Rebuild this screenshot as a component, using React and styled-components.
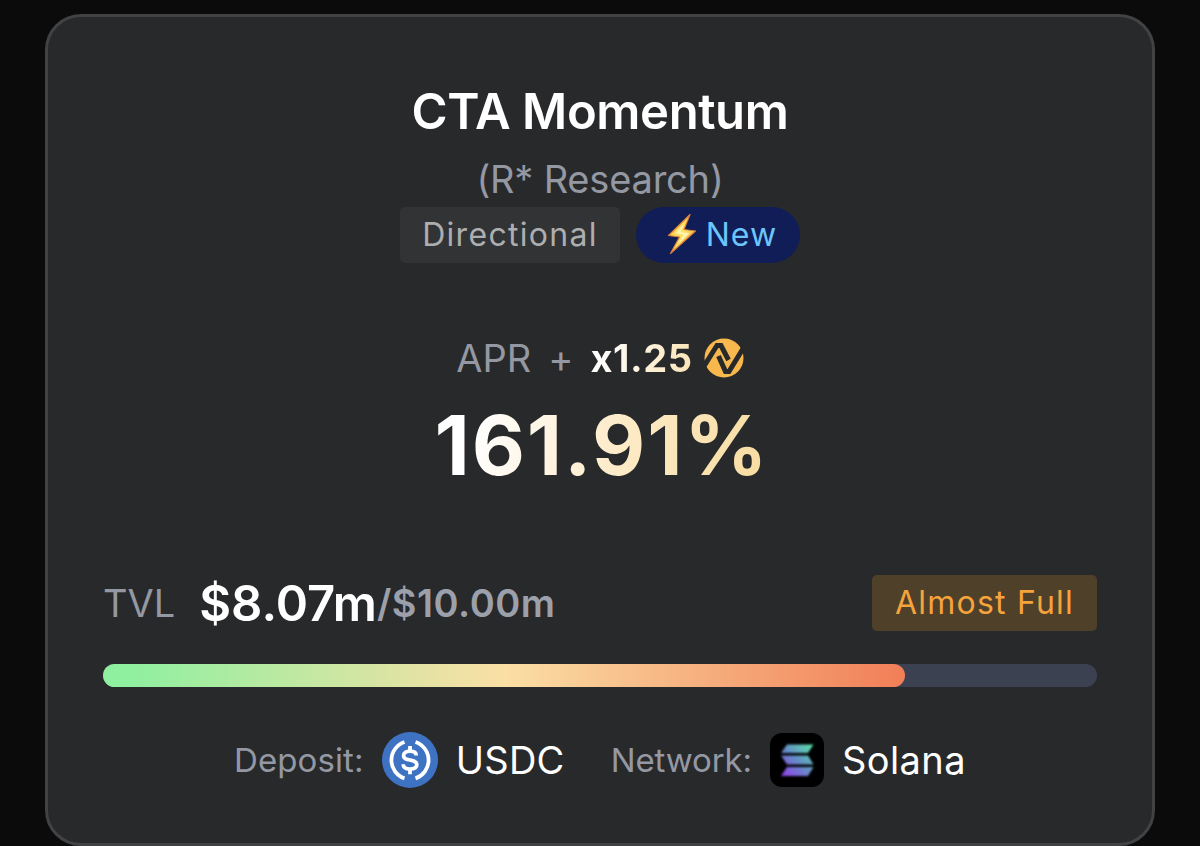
import styled, { createGlobalStyle } from "styled-components";

const vault = {
  name: "CTA Momentum",
  manager: "(R* Research)",
  strategy: "Directional",
  multiplier: "x1.25",
  apr: "161.91%",
  tvl: "$8.07m",
  capacity: "$10.00m",
  filled: 80.7,
};

export default function App() {
  return (
    <>
      <GlobalStyle />
      <Page>
        <Card>
          <Title>{vault.name}</Title>
          <Manager>{vault.manager}</Manager>
          <Badges>
            <Tag>
              <Text $size={32} $spacing={1.3}>{vault.strategy}</Text>
            </Tag>
            <NewPill>
              <BoltIcon />
              <Text $size={32} $spacing={1.1}>New</Text>
            </NewPill>
          </Badges>

          <AprRow>
            <Text $size={38} $color="#9498a3">APR</Text>
            <Text $size={38} $color="#9498a3">+</Text>
            <Multiplier>{vault.multiplier}</Multiplier>
            <NeutralIcon />
          </AprRow>
          <Apr>{vault.apr}</Apr>

          <TvlRow>
            <Text $size={38} $color="#9498a3">TVL</Text>
            <Amounts>
              <Text $size={49} $weight={600} $color="#ffffff">{vault.tvl}</Text>
              <Text $size={38} $weight={600} $spacing={0.5} $color="#9ca0ab">
                /{vault.capacity}
              </Text>
            </Amounts>
            <Status>
              <Text $size={32} $spacing={1.2}>Almost Full</Text>
            </Status>
          </TvlRow>
          <Track>
            <Fill style={{ width: `${vault.filled}%` }} />
          </Track>

          <Footer>
            <Asset>
              <Text $size={33} $spacing={0.1} $color="#9498a3">Deposit:</Text>
              <UsdcIcon />
              <Text $size={38} $spacing={0.3} $color="#ffffff">USDC</Text>
            </Asset>
            <Asset>
              <Text $size={33} $spacing={-0.1} $color="#9498a3">Network:</Text>
              <SolanaIcon />
              <Text $size={38} $spacing={0.4} $color="#ffffff">Solana</Text>
            </Asset>
          </Footer>
        </Card>
      </Page>
    </>
  );
}

function BoltIcon() {
  return (
    <svg width="30" height="42" viewBox="0 0 30 42">
      <defs>
        <linearGradient id="bolt" x1="0" y1="0" x2="1" y2="1">
          <stop offset="0" stopColor="#ffb52e" />
          <stop offset="0.5" stopColor="#ffe467" />
          <stop offset="1" stopColor="#f58a2c" />
        </linearGradient>
      </defs>
      <path
        d="M23 1.5 1.5 22.5 12.5 24 3.5 40.5 28.5 18 17 16.5Z"
        fill="url(#bolt)"
        stroke="#d9803a"
        strokeWidth="1.2"
        strokeLinejoin="round"
      />
      <path d="M17.5 10.5 8 20.3 16.5 21.5 11 31 22.5 20.3 13.5 19Z" fill="#fff3b0" />
    </svg>
  );
}

function NeutralIcon() {
  return (
    <svg width="40" height="40" viewBox="0 0 40 40">
      <circle cx="20" cy="20" r="19.5" fill="#f8b84e" />
      <g fill="none" stroke="#28292b" strokeWidth="5">
        <path d="M0.5 27.5 13 7.5H17L24.5 22" />
        <path d="M14.5 18 21.5 33.5H25L40 9" />
      </g>
    </svg>
  );
}

function UsdcIcon() {
  return (
    <svg width="56" height="56" viewBox="0 0 56 56">
      <circle cx="28" cy="28" r="28" fill="#3e73c4" />
      <g fill="none" stroke="#fff" strokeWidth="3.8">
        <path d="M22.5 10A19.2 19.2 0 0 0 22.5 46.4" />
        <path d="M33.5 10A19.2 19.2 0 0 1 33.5 46.4" />
        <path
          d="M34.2 23.5C34.2 20.6 31.7 19.2 28 19.2S21.6 20.9 21.6 23.7C21.6 30 34.8 26 34.8 32.7C34.8 35.6 32 37 28 37S21.2 35.4 21.2 32.2"
          strokeWidth="3.7"
        />
        <path d="M28 14V19.2M28 37V42.2" />
      </g>
    </svg>
  );
}

function SolanaIcon() {
  return (
    <svg width="54" height="54" viewBox="0 0 54 54">
      <defs>
        <linearGradient id="sol" gradientUnits="userSpaceOnUse" x1="42" y1="12" x2="14" y2="42">
          <stop offset="0" stopColor="#5ce0a8" />
          <stop offset="0.5" stopColor="#6390c6" />
          <stop offset="1" stopColor="#8d45e8" />
        </linearGradient>
        <filter id="soft">
          <feGaussianBlur stdDeviation="0.8" />
        </filter>
      </defs>
      <rect width="54" height="54" rx="12" fill="#000" />
      <path
        fill="url(#sol)"
        filter="url(#soft)"
        d="M17 11.5H43.5L38 20H11ZM11 22.5H38L43.5 31.5H17ZM17 34H43.5L38 43H11Z"
      />
    </svg>
  );
}

const GlobalStyle = createGlobalStyle`
  * {
    box-sizing: border-box;
  }

  body {
    margin: 0;
    background: #0b0b0b;
    font-family: Inter, "Liberation Sans", sans-serif;
  }

  svg {
    display: block;
    flex-shrink: 0;
  }
`;

const Page = styled.main`
  height: 846px;
  padding: 14px 45px 0;
  overflow: hidden;
`;

const Card = styled.section`
  height: 832px;
  padding: 65px 55px 0;
  display: flex;
  flex-direction: column;
  align-items: center;
  background: #28292b;
  border: 3px solid #414244;
  border-radius: 36px;
  white-space: nowrap;
`;

const Text = styled.span`
  font-size: ${({ $size }) => $size}px;
  font-weight: ${({ $weight }) => $weight || 400};
  letter-spacing: ${({ $spacing }) => $spacing || 0}px;
  color: ${({ $color }) => $color || "inherit"};
`;

const Title = styled.h1`
  margin: 0;
  font-size: 49px;
  font-weight: 600;
  line-height: 60px;
  letter-spacing: -0.4px;
  color: #ffffff;
`;

const Manager = styled.div`
  margin-top: 13px;
  font-size: 38px;
  line-height: 48px;
  letter-spacing: -0.2px;
  color: #9498a3;
`;

const Badges = styled.div`
  margin-top: 4px;
  display: flex;
  gap: 16px;
`;

const Tag = styled.div`
  width: 220px;
  height: 56px;
  padding-bottom: 2px;
  display: flex;
  align-items: center;
  justify-content: center;
  border-radius: 5px;
  background: #323335;
  color: #adaeb0;
`;

const NewPill = styled(Tag)`
  width: 164px;
  padding-left: 8px;
  gap: 9px;
  border-radius: 28px;
  background: #101d57;
  color: #6cc5fb;
`;

const AprRow = styled.div`
  height: 48px;
  margin-top: 71px;
  display: flex;
  align-items: center;
  gap: 17px;

  svg {
    margin-left: -6px;
  }
`;

const Multiplier = styled.span`
  font-size: 38px;
  font-weight: 700;
  letter-spacing: 0.6px;
  background: linear-gradient(100deg, #ffffff 10%, #fbe3b4 100%);
  background-clip: text;
  color: transparent;
`;

const Apr = styled.div`
  margin-top: 16px;
  margin-left: 4px;
  font-size: 82px;
  font-weight: 700;
  line-height: 96px;
  letter-spacing: 1.8px;
  background: linear-gradient(100deg, #ffffff 12%, #fdebc8 55%, #f7dc9f 100%);
  background-clip: text;
  color: transparent;
`;

const TvlRow = styled.div`
  width: 100%;
  height: 56px;
  margin-top: 81px;
  display: flex;
  align-items: center;
  gap: 24px;
`;

const Amounts = styled.div`
  display: flex;
  align-items: center;
`;

const Status = styled(Tag)`
  width: 225px;
  margin-left: auto;
  background: #4f402a;
  color: #f6a33c;
`;

const Track = styled.div`
  width: 100%;
  height: 23px;
  margin-top: 33px;
  border-radius: 12px;
  background: #3b4150;
`;

const Fill = styled.div`
  height: 100%;
  border-radius: 12px;
  background: linear-gradient(90deg, #8ff0a0 3%, #fbdfa5 50%, #f17e57 100%);
`;

const Footer = styled.div`
  height: 56px;
  margin-top: 45px;
  display: flex;
  align-items: center;
  gap: 46px;
`;

const Asset = styled.div`
  display: flex;
  align-items: center;
  gap: 18px;
`;
